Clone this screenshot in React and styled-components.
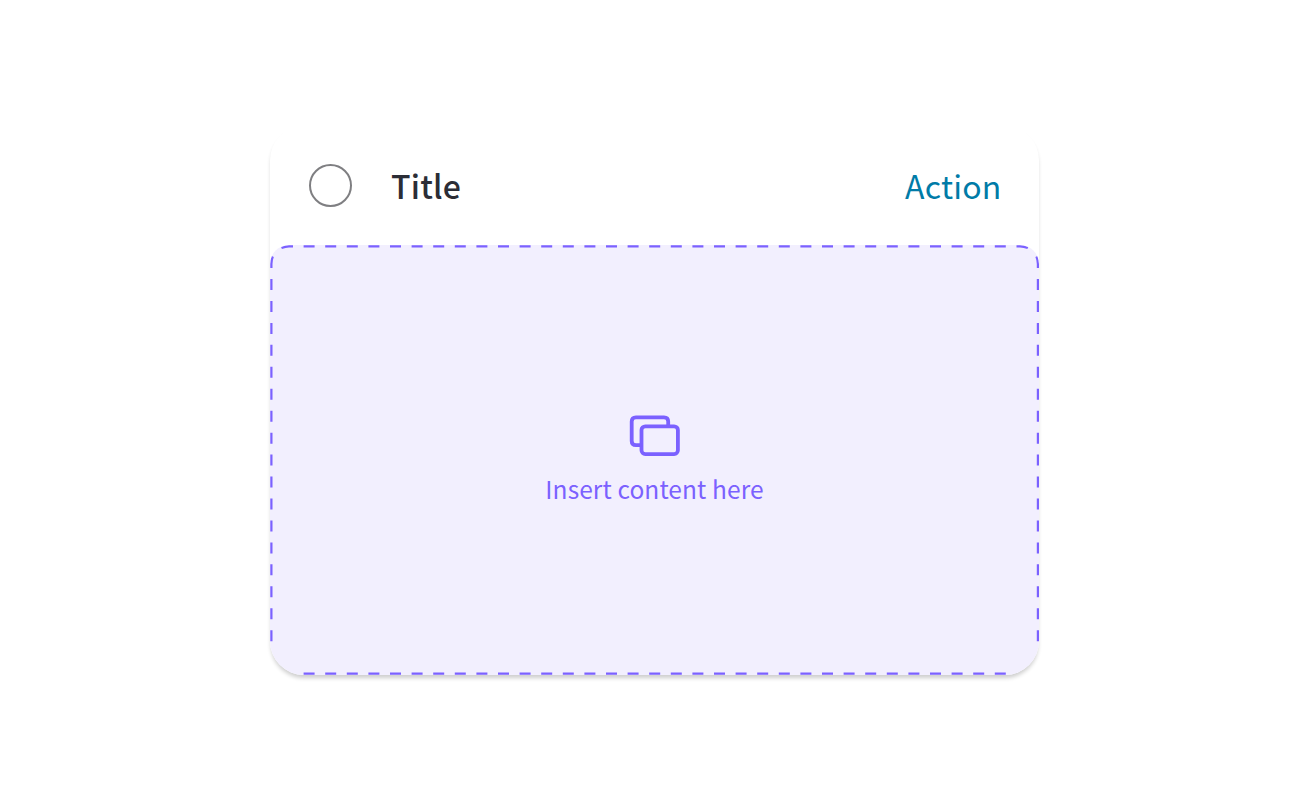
import React from "react";
import styled, { createGlobalStyle } from "styled-components";

const GlobalStyle = createGlobalStyle`
  body {
    margin: 0;
    background: #fff;
  }
`;

const Page = styled.div`
  box-sizing: border-box;
  height: 800px;
  padding: 126px 0 0 270px;
  overflow: hidden;
  font-family: "Noto Sans CJK JP", "Noto Sans", sans-serif;
`;

const Card = styled.div`
  width: 769px;
  height: 549px;
  display: flex;
  flex-direction: column;
  border-radius: 34px;
  background: #fff;
  box-shadow: 0 4px 4px -1px rgba(0, 0, 0, 0.2);
`;

const Header = styled.div`
  box-sizing: border-box;
  height: 119px;
  padding: 0 37.5px 0 39px;
  display: flex;
  align-items: center;
`;

const Radio = styled.div`
  box-sizing: border-box;
  width: 43px;
  height: 43px;
  border: 2px solid #7f7f82;
  border-radius: 50%;
`;

const Title = styled.div`
  flex: 1;
  padding: 0 0 1px 39px;
  font-size: 32px;
  font-weight: 500;
  line-height: 44px;
  letter-spacing: 0.2px;
  color: #2b2d36;
`;

const Action = styled.a`
  padding-bottom: 1px;
  font-size: 32px;
  line-height: 44px;
  letter-spacing: 0.2px;
  color: #007ba7;
`;

const Slot = styled.div`
  position: relative;
  flex: 1;
  display: flex;
  flex-direction: column;
  align-items: center;
  box-sizing: border-box;
  padding-top: 170px;
  border-radius: 19px 19px 34px 34px;
  background: #f2effe;
  overflow: hidden;
`;

const Outline = styled.svg`
  position: absolute;
  top: 0;
  left: 0;
`;

const SlotText = styled.div`
  margin-top: 14px;
  font-size: 24.5px;
  line-height: 36px;
  letter-spacing: 0.1px;
  color: #7b61ff;
`;

function DashedOutline() {
  return (
    <Outline width="769" height="430" fill="none" stroke="#7b61ff" strokeWidth="2.2">
      <path d="M11.5 3Q15.5 1.4 19 1.4H23" />
      <path d="M746.5 1.4H750Q754 1.4 757.8 3" />
      <path d="M2.8 11.5Q1.4 15 1.4 19V23" />
      <path d="M766.4 11.5Q767.9 15 767.9 19V23" />
      <path d="M33.6 1.4H737" strokeDasharray="11 10.6" />
      <path d="M33.6 428.7H737" strokeDasharray="11 10.6" />
      <path d="M1.4 34V397" strokeDasharray="11 10.95" />
      <path d="M767.9 34V397" strokeDasharray="11 10.95" />
    </Outline>
  );
}

function StackIcon() {
  return (
    <svg width="52" height="42" viewBox="0 0 52 42" fill="none" stroke="#7b61ff" strokeWidth="3.8">
      <rect x="12.5" y="11.3" width="36.4" height="27.8" rx="3.8" />
      <path d="M12.5 30.1H6.9Q2.7 30.1 2.7 25.9V6.5Q2.7 2.3 6.9 2.3H35Q39.2 2.3 39.2 6.5V11.3" />
    </svg>
  );
}

function App() {
  return (
    <Page>
      <GlobalStyle />
      <Card>
        <Header>
          <Radio />
          <Title>Title</Title>
          <Action>Action</Action>
        </Header>
        <Slot>
          <DashedOutline />
          <StackIcon />
          <SlotText>Insert content here</SlotText>
        </Slot>
      </Card>
    </Page>
  );
}

export default App;
